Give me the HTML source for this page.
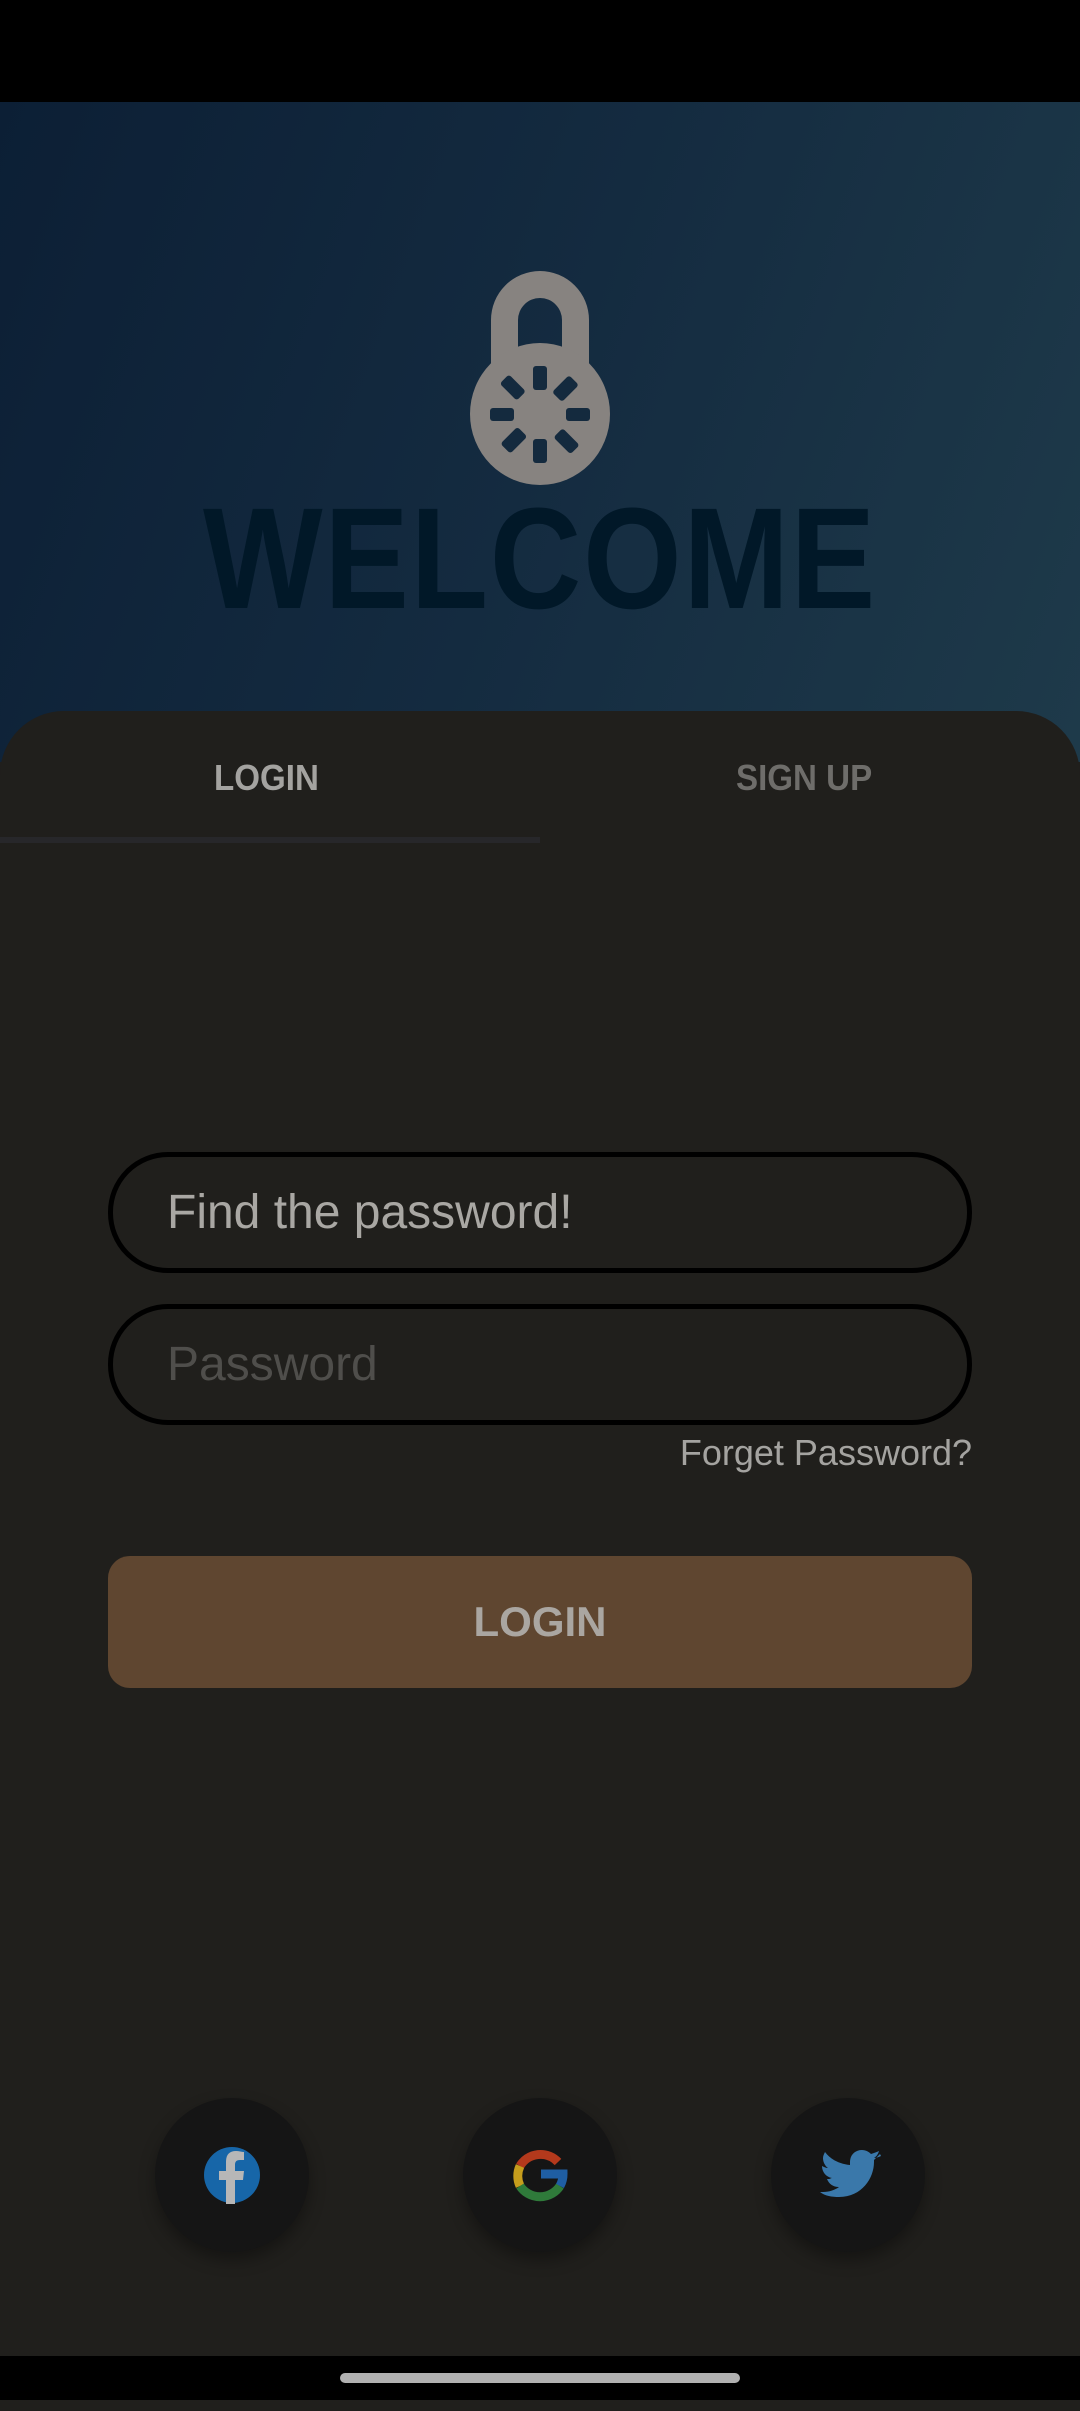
<!DOCTYPE html>
<html><head><meta charset="utf-8"><style>
*{margin:0;padding:0;box-sizing:border-box}
body{width:1080px;height:2400px;position:relative;overflow:hidden;background:#201f1c;font-family:"Liberation Sans",sans-serif}
.status{position:absolute;left:0;top:0;width:1080px;height:102px;background:#000}
.hdr{position:absolute;left:0;top:102px;width:1080px;height:660px;background:linear-gradient(110deg,#0c1f35 0%,#142b40 50%,#1e3a4a 100%)}
.welcome{position:absolute;left:0;top:484px;width:1080px;text-align:center;font-weight:bold;font-size:144px;color:#011828;transform:scaleX(0.88);letter-spacing:2px;line-height:150px}
.sheet{position:absolute;left:0;top:711px;width:1080px;height:1700px;background:#201f1c;border-radius:64px 64px 0 0}
.tab{position:absolute;top:757px;font-size:36px;color:#a4a3a0;transform:scaleX(0.92);transform-origin:left;font-weight:bold}
.ind{position:absolute;left:0;top:837px;width:540px;height:6px;background:#27272a}
.inp{position:absolute;left:108px;width:864px;height:121px;border:5px solid #000;border-radius:60px;font-size:48px;padding-left:54px;line-height:111px}
.fp{position:absolute;right:108px;top:1432px;font-size:36px;color:#a4a3a0}
.btn{position:absolute;left:108px;top:1556px;width:864px;height:132px;background:#5f4630;border-radius:22px;text-align:center;line-height:132px;font-size:42px;font-weight:bold;color:#aaa6a1}
.c{position:absolute;top:2098px;width:154px;height:154px;border-radius:50%;background:#151515;box-shadow:0 8px 16px rgba(0,0,0,.35)}
.nav{position:absolute;left:0;top:2356px;width:1080px;height:44px;background:#000}
.handle{position:absolute;left:340px;top:2373px;width:400px;height:10px;border-radius:5px;background:#b1b1b1}
</style></head><body>
<div class="status"></div>
<div class="hdr"></div>
<svg style="position:absolute;left:0;top:0" width="1080" height="720">
<path d="M491 370 V320 A49 49 0 0 1 589 320 V370 H562 V320 A22 22 0 0 0 518 320 V370 Z" fill="#878380"/>
<ellipse cx="540" cy="414" rx="70" ry="71" fill="#878380"/>
<g fill="#142a3e">
<rect x="533" y="366" width="14" height="24" rx="3"/>
<rect x="533" y="439" width="14" height="24" rx="3"/>
<rect x="490" y="408" width="24" height="13" rx="3"/>
<rect x="566" y="408" width="24" height="13" rx="3"/>
<g transform="rotate(45 540 414)">
<rect x="533" y="366" width="14" height="24" rx="3"/>
<rect x="533" y="439" width="14" height="24" rx="3"/>
<rect x="490" y="408" width="24" height="13" rx="3"/>
<rect x="566" y="408" width="24" height="13" rx="3"/>
</g></g>
</svg>
<div class="welcome">WELCOME</div>
<div class="sheet"></div>
<div class="tab" style="left:214px">LOGIN</div>
<div class="tab" style="left:736px;color:#6e6d6a">SIGN UP</div>
<div class="ind"></div>
<div class="inp" style="top:1152px;color:#a9a7a3">Find the password!</div>
<div class="inp" style="top:1304px;color:#4f4e4b">Password</div>
<div class="fp">Forget Password?</div>
<div class="btn">LOGIN</div>
<div class="c" style="left:155px"><svg width="154" height="154"><circle cx="77" cy="77" r="28" fill="#1766a8"/><path d="M80 106 V82 H88 L89 73 H80 V67 C80 64 81 62 85 62 H89 V54 C87 54 84 53 81 53 C74 53 71 57 71 64 V73 H64 V82 H71 V106 Z" fill="#b7b7b7"/></svg></div>
<div class="c" style="left:463px"><svg width="154" height="154"><g fill="none" stroke-width="9"><path d="M95 64 A24 24 0 0 0 57 68" stroke="#b3391c"/><path d="M57 68 A24 24 0 0 0 57 88" stroke="#c69d1c"/><path d="M57 88 A24 24 0 0 0 97 88" stroke="#2f7a3a"/><path d="M97 88 A24 24 0 0 0 100 76 H78" stroke="#1f5ea3"/></g></svg></div>
<div class="c" style="left:771px"><svg width="154" height="154"><path d="M110 58 c-2 1-5 2-7 2 3-2 4-4 5-7-2 1-5 2-8 3-2-2-5-4-9-4-7 0-12 5-12 12 0 1 0 2 0 3-10-1-19-5-25-13-1 2-2 4-2 6 0 4 2 8 5 10-2 0-4-1-6-2 0 6 4 11 10 12-1 0-2 1-3 1-1 0-2 0-2 0 2 5 6 8 12 8-4 3-10 5-16 5-1 0-2 0-3 0 5 4 12 5 19 5 23 0 35-19 35-35v-2c2-2 4-4 6-6z" fill="#3a78aa"/></svg></div>
<div class="nav"></div>
<div class="handle"></div>
</body></html>
